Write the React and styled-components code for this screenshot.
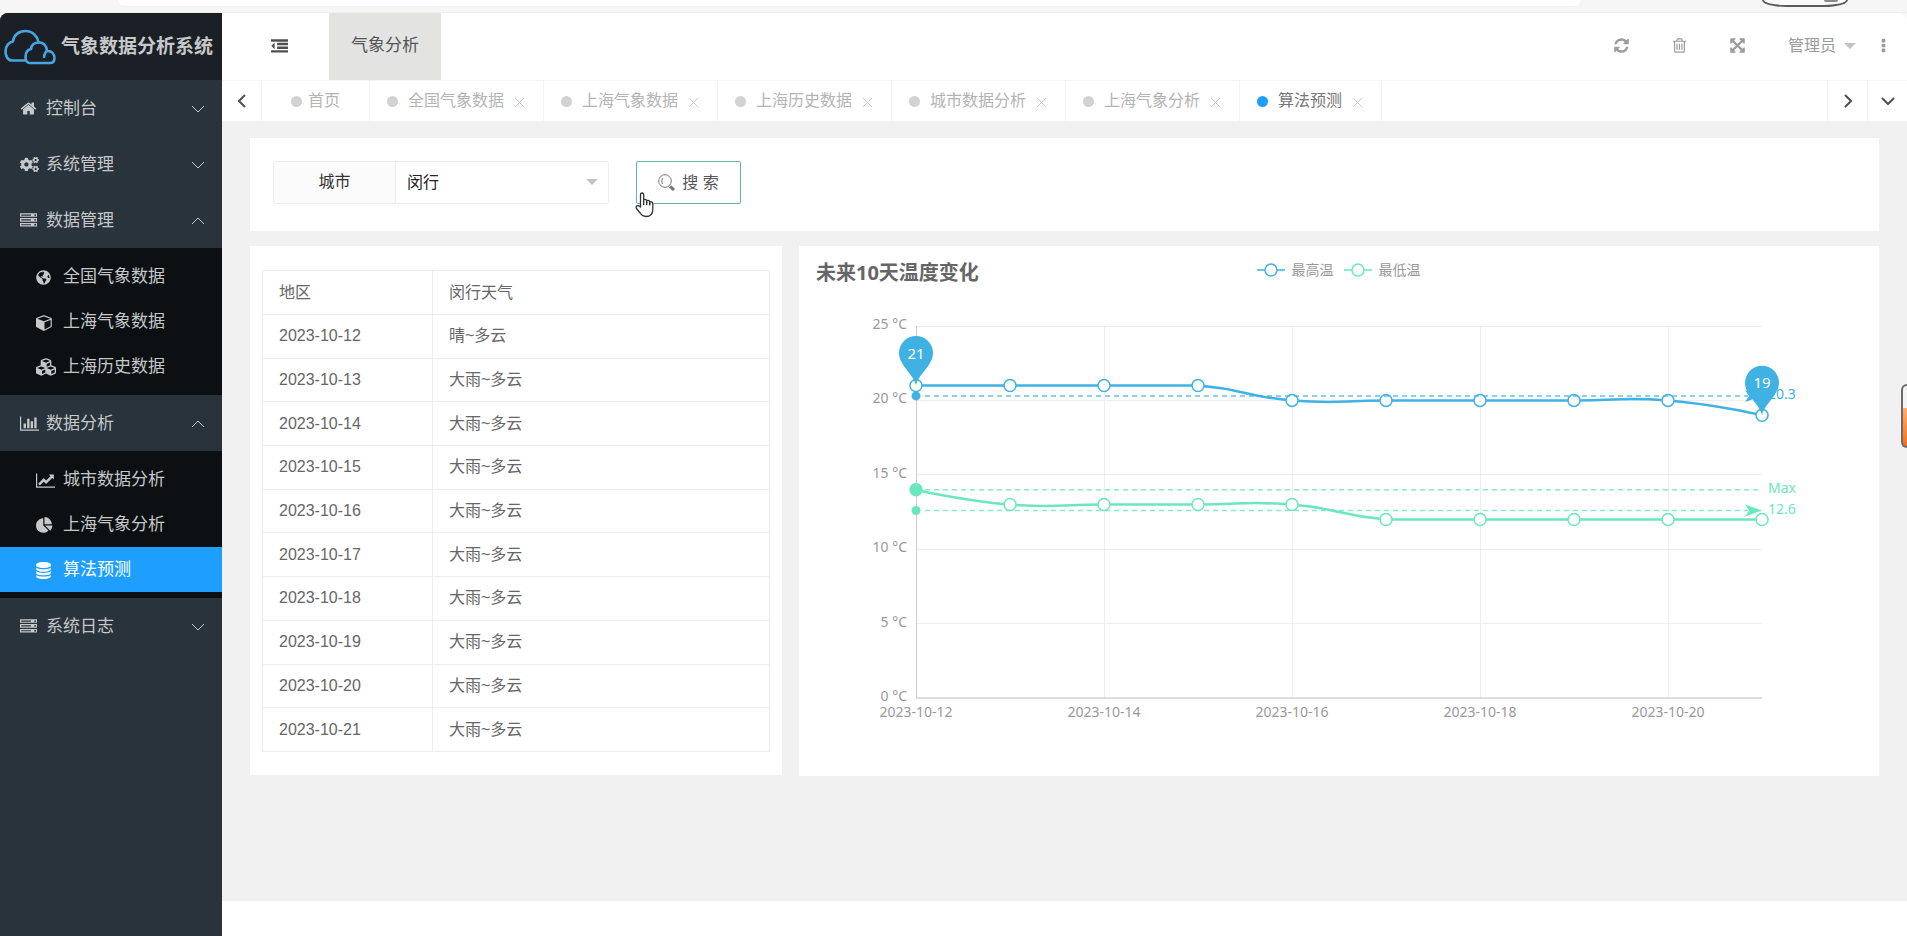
import React from "react";
import styled, { createGlobalStyle, css } from "styled-components";
import { FaCogs, FaCubes, FaGlobeAmericas } from "react-icons/fa";

const GlobalStyle = createGlobalStyle`
  *, *::before, *::after { box-sizing: border-box; }
  body {
    margin: 0;
    background: #f6f6f6;
    color: #666;
    font: 16px/24px "Liberation Sans", "Noto Sans CJK SC", sans-serif;
  }
  ul { margin: 0; padding: 0; list-style: none; }
  a { color: inherit; text-decoration: none; }
  button, select { font: inherit; color: inherit; }
  svg { display: block; flex: none; }
`;

/* ---------- icons ---------- */

const ICONS = {
  home: [1792, "M1472 992v480q0 26-19 45t-45 19h-384v-384h-256v384h-384q-26 0-45-19t-19-45v-480q0-1 .5-3t.5-3l575-474 575 474q1 2 1 6zm223-69l-62 74q-8 9-21 11h-3q-13 0-21-7l-692-577-692 577q-12 8-24 7-13-2-21-11l-62-74q-8-10-7-23.5t11-21.5l719-599q32-26 76-26t76 26l244 204v-195q0-14 9-23t23-9h192q14 0 23 9t9 23v408l219 182q10 8 11 21.5t-7 23.5z"],
  server: [1792, "M128 1408h1024v-128h-1024v128zm0-512h1024v-128h-1024v128zm1568 448q0-40-28-68t-68-28-68 28-28 68 28 68 68 28 68-28 28-68zm-1568-960h1024v-128h-1024v128zm1568 448q0-40-28-68t-68-28-68 28-28 68 28 68 68 28 68-28 28-68zm0-512q0-40-28-68t-68-28-68 28-28 68 28 68 68 28 68-28 28-68zm96 832v384h-1792v-384h1792zm0-512v384h-1792v-384h1792zm0-512v384h-1792v-384h1792z"],
  bars: [2048, "M640 896v512h-256v-512h256zm384-512v1024h-256v-1024h256zm1024 1152v128h-2048v-1536h128v1408h1920zm-640-896v768h-256v-768h256zm384-384v1152h-256v-1152h256z"],
  line: [2048, "M2048 1536v128h-2048v-1536h128v1408h1920zm-128-1248v435q0 21-19.5 29.5t-35.5-7.5l-121-121-633 633q-10 10-23 10t-23-10l-233-233-416 416-192-192 585-585q10-10 23-10t23 10l233 233 464-464-121-121q-16-16-7.5-35.5t29.5-19.5h435q14 0 23 9t9 23z"],
  pie: [1792, "M768 890l546 546q-106 108-247.5 168t-298.5 60q-209 0-385.5-103t-279.5-279.5-103-385.5 103-385.5 279.5-279.5 385.5-103v762zm187 6h773q0 157-60 298.5t-168 247.5zm709-128h-768v-768q209 0 385.5 103t279.5 279.5 103 385.5z"],
  database: [1536, "M768 768q237 0 443-43t325-127v170q0 69-103 128t-280 93.5-385 34.5-385-34.5-280-93.5-103-128v-170q119 84 325 127t443 43zm0 768q237 0 443-43t325-127v170q0 69-103 128t-280 93.5-385 34.5-385-34.5-280-93.5-103-128v-170q119 84 325 127t443 43zm0-384q237 0 443-43t325-127v170q0 69-103 128t-280 93.5-385 34.5-385-34.5-280-93.5-103-128v-170q119 84 325 127t443 43zm0-1152q208 0 385 34.5t280 93.5 103 128v128q0 69-103 128t-280 93.5-385 34.5-385-34.5-280-93.5-103-128v-128q0-69 103-128t280-93.5 385-34.5z"],
  cube: [1792, "M896 1629l640-349v-636l-640 233v752zm-64-865l698-254-698-254-698 254zm832-252v768q0 35-18 65t-49 47l-704 384q-28 16-61 16t-61-16l-704-384q-31-17-49-47t-18-65v-768q0-40 23-73t61-47l704-256q22-8 44-8t44 8l704 256q38 14 61 47t23 73z"],
  refresh: [1792, "M1639 1056q0 5-1 7-64 268-268 434.5t-478 166.5q-146 0-282.5-55t-243.5-157l-129 129q-19 19-45 19t-45-19-19-45v-448q0-26 19-45t45-19h448q26 0 45 19t19 45-19 45l-137 137q71 66 161 102t187 36q134 0 250-65t186-179q11-17 53-117 8-23 30-23h192q13 0 22.5 9.5t9.5 22.5zm25-800v448q0 26-19 45t-45 19h-448q-26 0-45-19t-19-45 19-45l138-138q-148-137-349-137-134 0-250 65t-186 179q-11 17-53 117-8 23-30 23h-199q-13 0-22.5-9.5t-9.5-22.5v-7q65-268 270-434.5t480-166.5q146 0 284 55.5t245 156.5l130-129q19-19 45-19t45 19 19 45z"],
  trash: [1792, "M704 736v576q0 14-9 23t-23 9h-64q-14 0-23-9t-9-23v-576q0-14 9-23t23-9h64q14 0 23 9t9 23zm256 0v576q0 14-9 23t-23 9h-64q-14 0-23-9t-9-23v-576q0-14 9-23t23-9h64q14 0 23 9t9 23zm256 0v576q0 14-9 23t-23 9h-64q-14 0-23-9t-9-23v-576q0-14 9-23t23-9h64q14 0 23 9t9 23zm128 724v-948h-896v948q0 22 7 40.5t14.5 27 10.5 8.5h832q3 0 10.5-8.5t14.5-27 7-40.5zm-672-1076h448l-48-117q-7-9-17-11h-317q-10 2-17 11zm928 32v64q0 14-9 23t-23 9h-96v948q0 83-47 143.5t-113 60.5h-832q-66 0-113-58.5t-47-141.5v-952h-96q-14 0-23-9t-9-23v-64q0-14 9-23t23-9h309l70-167q15-37 54-63t79-26h320q40 0 79 26t54 63l70 167h309q14 0 23 9t9 23z"],
  expand: [1792, "M1411 541l-355 355 355 355 144-144q29-31 70-14 39 17 39 59v448q0 26-19 45t-45 19h-448q-42 0-59-40-17-39 14-69l144-144-355-355-355 355 144 144q31 30 14 69-17 40-59 40h-448q-26 0-45-19t-19-45v-448q0-42 40-59 39-17 69 14l144 144 355-355-355-355-144 144q-19 19-45 19-12 0-24-5-40-17-40-59v-448q0-26 19-45t45-19h448q42 0 59 40 17 39-14 69l-144 144 355 355 355-355-144-144q-31-30-14-69 17-40 59-40h448q26 0 45 19t19 45v448q0 42-39 59-13 5-25 5-26 0-45-19z"],
  more: [1792, "M800 1216h192q96 0 96 96v192q0 96-96 96h-192q-96 0-96-96v-192q0-96 96-96zM800 704h192q96 0 96 96v192q0 96-96 96h-192q-96 0-96-96v-192q0-96 96-96zM800 192h192q96 0 96 96v192q0 96-96 96h-192q-96 0-96-96v-192q0-96 96-96z"],
  dedent: [1792, "M384 544v576q0 13-9.5 22.5t-22.5 9.5q-14 0-23-9l-288-288q-9-9-9-23t9-23l288-288q9-9 23-9 13 0 22.5 9.5t9.5 22.5zM32 1280h1728q32 0 32 32v192q0 32-32 32h-1728q-32 0-32-32v-192q0-32 32-32zM672 896h1088q32 0 32 32v192q0 32-32 32h-1088q-32 0-32-32v-192q0-32 32-32zM672 512h1088q32 0 32 32v192q0 32-32 32h-1088q-32 0-32-32v-192q0-32 32-32zM32 128h1728q32 0 32 32v192q0 32-32 32h-1728q-32 0-32-32v-192q0-32 32-32z"],
};

function Icon({ name, size = 17 }) {
  const [w, d] = ICONS[name];
  return (
    <svg height={size} width={Math.round((size * w) / 1792)} viewBox={`0 0 ${w} 1792`} fill="currentColor" aria-hidden="true">
      <path d={d} />
    </svg>
  );
}

const CHEVRONS = {
  down: [14, 8, "M1 1l6 6 6-6"],
  up: [14, 8, "M1 7l6-6 6 6"],
  left: [8, 14, "M7 1L1 7l6 6"],
  right: [8, 14, "M1 1l6 6-6 6"],
};

function Chevron({ dir, weight = 1 }) {
  const [w, h, d] = CHEVRONS[dir];
  return (
    <svg width={w} height={h} viewBox={`0 0 ${w} ${h}`} fill="none" stroke="currentColor" strokeWidth={weight} aria-hidden="true">
      <path d={d} />
    </svg>
  );
}

const Caret = () => (
  <svg width="12" height="6" viewBox="0 0 12 6" fill="#c2c2c2" aria-hidden="true">
    <path d="M0 0h12L6 6z" />
  </svg>
);

const CloudLogo = () => (
  <svg width="52" height="36" viewBox="0 0 52 36" fill="none" stroke="#46a6e4" strokeWidth="2.6" strokeLinecap="round" strokeLinejoin="round" aria-hidden="true">
    <path d="M21.500 31.500H8C3.500 31.500 1.500 26.500 1.500 22.500C1.500 16.500 5.500 13 9 12.500C9.500 6.500 14.500 2 21.500 2C29 2 33.500 7.500 34.500 13" />
    <path d="M26 34C22.500 34 21.500 31 21.500 28C21.500 22.500 24.500 20.500 27 20C27.500 15.500 31 13.500 35 13.500C40 13.500 42.500 17 43 22C48 21.500 50.500 25.500 50.500 29C50.500 32.500 48.500 34 46 34Z" />
    <path d="M43 22C41.300 23 40.500 24.500 40 28" />
  </svg>
);

const SearchIcon = () => (
  <svg width="17" height="17" viewBox="0 0 17 17" fill="none" stroke="#777" aria-hidden="true">
    <circle cx="7" cy="7" r="6.300" />
    <path d="M4.500 4Q3 7 4.500 10" />
    <path d="M12 12.500l4 3.500" strokeWidth="3" />
  </svg>
);

const HandPointer = () => (
  <svg width="19" height="26" viewBox="0 0 19 26" fill="#fff" stroke="#333" strokeWidth="1.300" strokeLinejoin="round" aria-hidden="true">
    <path d="M5.500 15V3Q5.500 1 7 1Q8.700 1 8.700 3V10V7.800Q10.300 6.800 11.700 8.300V11V8.800Q13.300 7.800 14.700 9.300V12V10Q17.800 9 17.800 12V17Q17.800 24.500 11 24.500Q7.500 24.500 5.500 21.500L1.500 16.500Q0.500 14.500 2 13.800Q3.500 13.300 5.500 15Z" />
    <path d="M8.700 9.500V13M11.700 10V13M14.700 11V13.500" />
  </svg>
);

/* ---------- shell ---------- */

const Page = styled.div`
  position: relative;
  display: flex;
  flex-direction: column;
  min-height: 100vh;
  overflow: hidden;
`;

const BrowserEdge = styled.div`
  display: flex;
  align-items: flex-start;
  height: 13px;
  padding: 0 59px 0 118px;
  border-bottom: 1px solid #efefef;
`;

const AddressBar = styled.div`
  flex: 1;
  height: 7px;
  background: #fff;
  border-bottom: 1px solid #f1f1f1;
  border-radius: 0 0 14px 14px;
`;

const BrowserPill = styled.div`
  display: flex;
  justify-content: flex-end;
  width: 86px;
  height: 7px;
  margin-left: 181px;
  padding-right: 8px;
  border: 2px solid #5c5c5c;
  border-top: 0;
  border-radius: 0 0 24px 24px / 0 0 7px 7px;
  background: #fafafa;
`;

const PillDot = styled.i`
  width: 14px;
  height: 2px;
  border-radius: 0 0 7px 7px;
  background: #8a8a8a;
`;

const Shell = styled.div`
  flex: 1;
  display: grid;
  grid-template-columns: 222px minmax(0, 1fr);
  border-radius: 8px 8px 0 0;
  background: #fff;
  overflow: hidden;
`;

const SideTool = styled.div`
  position: absolute;
  top: 384px;
  right: 0;
  width: 6px;
  height: 64px;
  border: 2px solid #6b6b6b;
  border-right: 0;
  border-radius: 6px 0 0 6px;
  background: linear-gradient(#f3f3f3 22px, #ffb070 22px, #f37021);
`;

/* ---------- sidebar ---------- */

const Sidebar = styled.aside`
  background: #28333c;
  color: #c6c8c9;
`;

const Brand = styled.h1`
  display: flex;
  align-items: center;
  gap: 5px;
  height: 67px;
  margin: 0;
  padding: 0 4px;
  background: #1a2026;
  font-size: 19px;
  white-space: nowrap;
`;

const menuRow = css`
  display: grid;
  align-items: center;
  width: 100%;
  border: 0;
  background: none;
  font-size: 17px;
  text-align: left;
  cursor: pointer;
`;

const GroupButton = styled.button`
  ${menuRow}
  grid-template-columns: 26px 1fr auto;
  height: 56px;
  padding: 1px 17px 0 20px;
`;

const SubMenu = styled.ul`
  padding: 6px 0;
  background: #0c1013;
`;

const SubLink = styled.a`
  ${menuRow}
  grid-template-columns: 27px 1fr;
  height: 45px;
  padding: 1px 17px 0 36px;
  ${(p) => p.$active && css`background: #1e9fff; color: #fff;`}
`;

const MENU = [
  { label: "控制台", icon: <Icon name="home" /> },
  { label: "系统管理", icon: <FaCogs size={19} /> },
  {
    label: "数据管理",
    icon: <Icon name="server" />,
    items: [
      { label: "全国气象数据", icon: <FaGlobeAmericas size={15} /> },
      { label: "上海气象数据", icon: <Icon name="cube" /> },
      { label: "上海历史数据", icon: <FaCubes size={20} /> },
    ],
  },
  {
    label: "数据分析",
    icon: <Icon name="bars" />,
    items: [
      { label: "城市数据分析", icon: <Icon name="line" /> },
      { label: "上海气象分析", icon: <Icon name="pie" /> },
      { label: "算法预测", icon: <Icon name="database" />, active: true },
    ],
  },
  { label: "系统日志", icon: <Icon name="server" /> },
];

/* ---------- header ---------- */

const Main = styled.div`
  display: flex;
  flex-direction: column;
`;

const Header = styled.header`
  display: flex;
  align-items: stretch;
  justify-content: space-between;
  height: 68px;
  border-bottom: 1px solid #f5f5f5;
`;

const HeaderGroup = styled.div`
  display: flex;
  align-items: stretch;
  padding-right: ${(p) => p.$end || 0}px;
`;

const IconButton = styled.button`
  display: flex;
  align-items: center;
  justify-content: center;
  width: 58px;
  padding: 0 0 2px;
  border: 0;
  background: none;
  color: #9c9c9c;
  cursor: pointer;
`;

const MenuToggle = styled(IconButton)`
  width: 107px;
  padding: 0 0 0 8px;
  color: #505050;
`;

const TopLink = styled.a`
  display: flex;
  align-items: center;
  padding: 0 22px 2px;
  background: #e3e3e1;
  color: #555;
  font-size: 17px;
`;

const UserButton = styled(IconButton)`
  gap: 8px;
  width: auto;
  padding: 0 12px 2px 21px;
`;

const MoreButton = styled(IconButton)`
  width: 30px;
`;

const TabBar = styled.nav`
  display: flex;
  height: 40px;
`;

const TabArrow = styled(IconButton)`
  width: 40px;
  padding: 0;
  color: #505050;
  border: solid #f5f5f5;
  border-width: ${(p) => (p.$left ? "0 1px 0 0" : "0 0 0 1px")};
`;

const TabList = styled.ul`
  flex: 1;
  display: flex;
  min-width: 0;
`;

const Tab = styled.li`
  display: flex;
  align-items: center;
  gap: ${(p) => (p.$home ? 6 : 10)}px;
  padding: 0 ${(p) => (p.$home ? 29 : 17)}px;
  border-right: 1px solid #f5f5f5;
  color: ${(p) => (p.$active ? "#777" : "#b4b4b4")};
  white-space: nowrap;
`;

const Dot = styled.i`
  width: 11px;
  height: 11px;
  border-radius: 50%;
  background: ${(p) => (p.$active ? "#1e9fff" : "#d2d2d2")};
`;

const CloseButton = styled.button`
  padding: 2px 1px 0 0;
  border: 0;
  background: none;
  color: #c8c8c8;
  cursor: pointer;
`;

const TABS = ["首页", "全国气象数据", "上海气象数据", "上海历史数据", "城市数据分析", "上海气象分析", "算法预测"];

/* ---------- content ---------- */

const Content = styled.main`
  flex: 1;
  display: flex;
  flex-direction: column;
  gap: 15px;
  margin-bottom: 35px;
  padding: 17px 28px 0;
  background: #f1f1f1;
`;

const SearchForm = styled.form`
  display: flex;
  align-items: center;
  gap: 27px;
  height: 93px;
  padding: 0 23px 4px;
  background: #fff;
`;

const Field = styled.div`
  position: relative;
  display: grid;
  grid-template-columns: 122px 212px;
  height: 43px;
  border: 1px solid #ededed;
  border-radius: 2px;
`;

const FieldLabel = styled.label`
  display: flex;
  align-items: center;
  justify-content: center;
  padding-bottom: 2px;
  border-right: 1px solid #ededed;
  background: #fbfbfb;
  color: #333;
`;

const Select = styled.select`
  appearance: none;
  padding: 0 36px 0 11px;
  border: 0;
  background: transparent;
  color: #222;
`;

const SelectCaret = styled.span`
  position: absolute;
  right: 10px;
  top: 17px;
  pointer-events: none;
`;

const SearchButton = styled.button`
  position: relative;
  display: flex;
  align-items: center;
  justify-content: center;
  gap: 7px;
  width: 105px;
  height: 43px;
  padding: 0;
  border: 1px solid #65b5a8;
  border-radius: 2px;
  background: #fff;
  color: #555;
  cursor: pointer;
`;

const PointerSpot = styled.span`
  position: absolute;
  left: -2px;
  top: 30px;
  pointer-events: none;
`;

const Panels = styled.div`
  display: grid;
  grid-template-columns: 33fr 67fr;
  gap: 17px;
  align-items: start;
`;

const Panel = styled.section`
  min-width: 0;
  background: #fff;
`;

const TablePanel = styled(Panel)`
  padding: 24px 12px 23px;
`;

const Table = styled.table`
  width: 100%;
  height: 482px;
  border-collapse: collapse;
  table-layout: fixed;
`;

const Cell = styled.td`
  width: ${(p) => p.$w || "auto"};
  height: 44px;
  padding: 0 16px;
  border: 1px solid #eee;
  color: #666;
  font-weight: 400;
  text-align: left;

  tbody & { height: 43px; }
`;

const DAYS = Array.from({ length: 10 }, (_, i) => `2023-10-${12 + i}`);

/* ---------- chart ---------- */

const ChartPanel = styled(Panel)`
  font-family: "Noto Sans", "Noto Sans CJK SC", sans-serif;
`;

const ChartHead = styled.div`
  display: grid;
  grid-template-columns: 1fr auto 1fr;
  align-items: center;
  height: 50px;
  padding: 0 17px;
`;

const ChartTitle = styled.h2`
  margin: 0;
  padding-top: 3px;
  color: #666;
  font-size: 20px;
`;

const Legend = styled.ul`
  display: flex;
  gap: 11px;
  padding-bottom: 2px;
`;

const LegendItem = styled.li`
  display: flex;
  align-items: center;
  gap: 6px;
  color: #999;
  font-size: 14px;
`;

const ChartSvg = styled.svg`
  width: 100%;
  height: auto;
  font-size: 14px;
`;

const BLUE = "#3fb1e3";
const GREEN = "#6be6c1";
const PLOT = { left: 117, right: 963, top: 30, bottom: 402 };
const HIGH = [21, 21, 21, 21, 20, 20, 20, 20, 20, 19];
const LOW = [14, 13, 13, 13, 13, 12, 12, 12, 12, 12];

const px = (i) => PLOT.left + (i * (PLOT.right - PLOT.left)) / 9;
const py = (v) => PLOT.bottom - (v * (PLOT.bottom - PLOT.top)) / 25;

// Smooth curve through the points; handles stay inside the range of the data.
function smoothPath(values) {
  const pts = values.map((v, i) => [px(i), py(v)]);
  const last = pts.length - 1;
  const yMin = py(Math.max(...values));
  const yMax = py(Math.min(...values));
  const clamp = (y) => Math.min(yMax, Math.max(yMin, y));
  const handle = (i) =>
    i === 0 || i === last ? [0, 0] : [(pts[i + 1][0] - pts[i - 1][0]) / 4, (pts[i + 1][1] - pts[i - 1][1]) / 4];
  return pts.reduce((d, [x, y], i) => {
    if (i === 0) return `M${x} ${y}`;
    const [ax, ay] = handle(i - 1);
    const [bx, by] = handle(i);
    return `${d}C${pts[i - 1][0] + ax} ${clamp(pts[i - 1][1] + ay)} ${x - bx} ${clamp(y - by)} ${x} ${y}`;
  }, "");
}

function Series({ values, color }) {
  return (
    <g stroke={color} fill="none">
      <path d={smoothPath(values)} strokeWidth="2.500" />
      {values.map((v, i) => (
        <circle key={i} cx={px(i)} cy={py(v)} r="6" fill="#fff" strokeWidth="1.500" />
      ))}
    </g>
  );
}

function MarkLine({ value, color, label, arrow }) {
  const y = py(value);
  const r = PLOT.right;
  return (
    <g fill={color}>
      <path d={`M${PLOT.left + 9} ${y}H${arrow ? r - 14 : r}`} stroke={color} strokeWidth="1.500" strokeDasharray="5 4" opacity="0.8" />
      <circle cx={PLOT.left} cy={y} r={arrow ? 4.5 : 6} />
      {arrow && <path d={`M${r} ${y}l-17 -6 4 6 -4 6z`} />}
      <text x={r + 6} y={y + 3}>{label}</text>
    </g>
  );
}

function Pin({ index, value }) {
  return (
    <g transform={`translate(${px(index)} ${py(value)})`}>
      <path d="M0 0C-2 -11 -17 -20 -17 -32.500A17 17 0 0 1 17 -32.500C17 -20 2 -11 0 0Z" fill={BLUE} />
      <text y="-27" fill="#fff" fontSize="15" textAnchor="middle">{value}</text>
    </g>
  );
}

function LegendMark({ color }) {
  return (
    <svg width="28" height="14" viewBox="0 0 28 14" stroke={color} strokeWidth="1.500" aria-hidden="true">
      <path d="M0 7h28" />
      <circle cx="14" cy="7" r="6" fill="#fff" />
    </svg>
  );
}

function TemperatureChart() {
  return (
    <ChartSvg viewBox="0 0 1080 480" role="img" aria-label="未来10天温度变化">
      <g stroke="#eee" shapeRendering="crispEdges">
        {[5, 10, 15, 20, 25].map((v) => (
          <path key={v} d={`M${PLOT.left} ${py(v)}H${PLOT.right}`} />
        ))}
        {[2, 4, 6, 8].map((i) => (
          <path key={i} d={`M${px(i)} ${PLOT.top}V${PLOT.bottom}`} />
        ))}
        <path d={`M${PLOT.left} ${PLOT.top}V${PLOT.bottom}`} stroke="#ccc" />
        <path d={`M${PLOT.left} ${PLOT.bottom}H${PLOT.right}`} stroke="#ddd" strokeWidth="2" />
      </g>
      <g fill="#999">
        {[0, 5, 10, 15, 20, 25].map((v) => (
          <text key={v} x={PLOT.left - 9} y={py(v) + 3} textAnchor="end">{v} °C</text>
        ))}
        {[0, 2, 4, 6, 8].map((i) => (
          <text key={i} x={px(i)} y={PLOT.bottom + 19} textAnchor="middle">{DAYS[i]}</text>
        ))}
      </g>
      <Series values={LOW} color={GREEN} />
      <Series values={HIGH} color={BLUE} />
      <MarkLine value={14} color={GREEN} label="Max" />
      <MarkLine value={12.6} color={GREEN} label="12.6" arrow />
      <MarkLine value={20.3} color={BLUE} label="20.3" arrow />
      <Pin index={0} value={21} />
      <Pin index={9} value={19} />
    </ChartSvg>
  );
}

/* ---------- app ---------- */

export default function App() {
  return (
    <Page>
      <GlobalStyle />
      <BrowserEdge>
        <AddressBar />
        <BrowserPill><PillDot /></BrowserPill>
      </BrowserEdge>
      <Shell>
        <Sidebar>
          <Brand><CloudLogo />气象数据分析系统</Brand>
          <ul>
            {MENU.map((group) => (
              <li key={group.label}>
                <GroupButton type="button" aria-expanded={Boolean(group.items)}>
                  {group.icon}
                  {group.label}
                  <Chevron dir={group.items ? "up" : "down"} />
                </GroupButton>
                {group.items && (
                  <SubMenu>
                    {group.items.map((item) => (
                      <li key={item.label}>
                        <SubLink href="#" $active={item.active}>
                          {item.icon}
                          {item.label}
                        </SubLink>
                      </li>
                    ))}
                  </SubMenu>
                )}
              </li>
            ))}
          </ul>
        </Sidebar>

        <Main>
          <Header>
            <HeaderGroup>
              <MenuToggle type="button" aria-label="收起菜单"><Icon name="dedent" /></MenuToggle>
              <TopLink href="#">气象分析</TopLink>
            </HeaderGroup>
            <HeaderGroup $end={9}>
              <IconButton type="button" aria-label="刷新"><Icon name="refresh" /></IconButton>
              <IconButton type="button" aria-label="清理"><Icon name="trash" /></IconButton>
              <IconButton type="button" aria-label="全屏"><Icon name="expand" /></IconButton>
              <UserButton type="button">管理员<Caret /></UserButton>
              <MoreButton type="button" aria-label="更多"><Icon name="more" /></MoreButton>
            </HeaderGroup>
          </Header>

          <TabBar>
            <TabArrow type="button" $left aria-label="向左"><Chevron dir="left" weight={2} /></TabArrow>
            <TabList>
              {TABS.map((name, i) => {
                const active = i === TABS.length - 1;
                return (
                  <Tab key={name} $home={i === 0} $active={active}>
                    <Dot $active={active} />
                    <a href="#">{name}</a>
                    {i > 0 && (
                      <CloseButton type="button" aria-label="关闭">
                        <svg width="11" height="11" viewBox="0 0 11 11" stroke="currentColor" aria-hidden="true">
                          <path d="M1 1l9 9M10 1l-9 9" />
                        </svg>
                      </CloseButton>
                    )}
                  </Tab>
                );
              })}
            </TabList>
            <TabArrow type="button" aria-label="向右"><Chevron dir="right" weight={2} /></TabArrow>
            <TabArrow type="button" aria-label="展开"><Chevron dir="down" weight={2} /></TabArrow>
          </TabBar>

          <Content>
            <SearchForm>
              <Field>
                <FieldLabel htmlFor="city">城市</FieldLabel>
                <Select id="city" defaultValue="闵行">
                  <option>闵行</option>
                </Select>
                <SelectCaret><Caret /></SelectCaret>
              </Field>
              <SearchButton type="button">
                <SearchIcon />
                搜 索
                <PointerSpot><HandPointer /></PointerSpot>
              </SearchButton>
            </SearchForm>

            <Panels>
              <TablePanel>
                <Table>
                  <thead>
                    <tr>
                      <Cell as="th" scope="col" $w="170px">地区</Cell>
                      <Cell as="th" scope="col">闵行天气</Cell>
                    </tr>
                  </thead>
                  <tbody>
                    {DAYS.map((day, i) => (
                      <tr key={day}>
                        <Cell>{day}</Cell>
                        <Cell>{i === 0 ? "晴~多云" : "大雨~多云"}</Cell>
                      </tr>
                    ))}
                  </tbody>
                </Table>
              </TablePanel>

              <ChartPanel>
                <ChartHead>
                  <ChartTitle>未来10天温度变化</ChartTitle>
                  <Legend>
                    <LegendItem><LegendMark color={BLUE} />最高温</LegendItem>
                    <LegendItem><LegendMark color={GREEN} />最低温</LegendItem>
                  </Legend>
                </ChartHead>
                <TemperatureChart />
              </ChartPanel>
            </Panels>
          </Content>
        </Main>
      </Shell>
      <SideTool />
    </Page>
  );
}
